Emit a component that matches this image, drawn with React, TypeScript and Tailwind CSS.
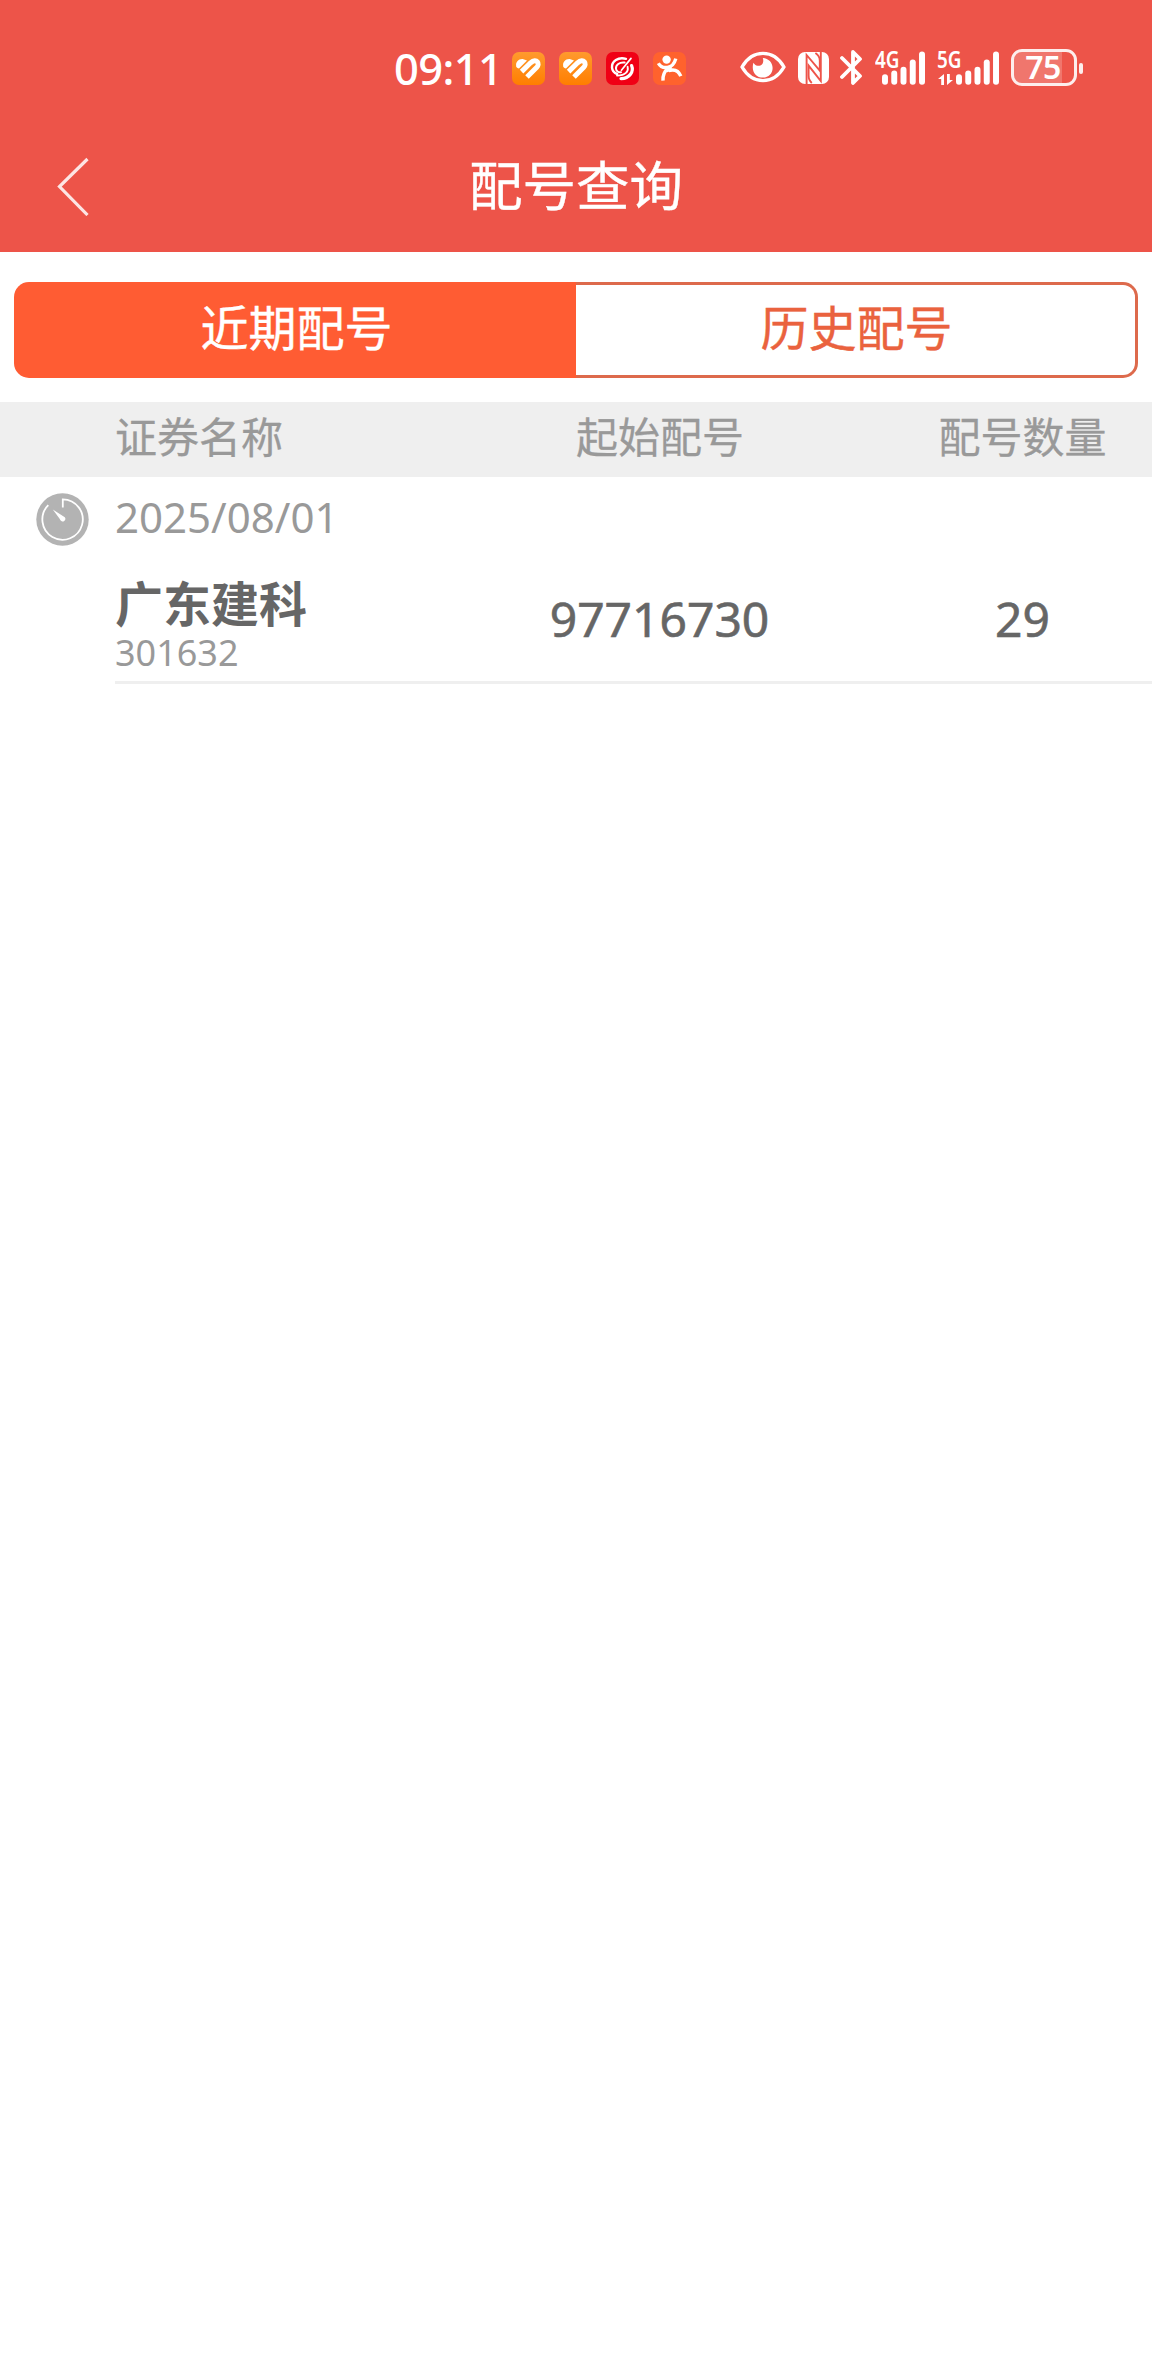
const allotments = [
  { date: '2025/08/01', name: '广东建科', code: '301632', startNumber: '97716730', count: '29' },
]

const signalBars = [
  { x: 0, y: 23.2 },
  { x: 9.3, y: 19.5 },
  { x: 18.6, y: 15.8 },
  { x: 27.9, y: 8.5 },
  { x: 37.2, y: 0.3 },
]

function HeartAppIcon() {
  return (
    <svg viewBox="0 0 33 33" className="size-[33px]">
      <defs>
        <linearGradient id="heartBg" x1="0" y1="0" x2="0" y2="1">
          <stop offset="0" stopColor="#ff9a2e" />
          <stop offset="1" stopColor="#ff7e00" />
        </linearGradient>
      </defs>
      <rect width="33" height="33" rx="7" fill="url(#heartBg)" />
      <path d="M4.2 14.2C3.2 10 7 6.4 11.4 7.2L15 8.4L7 16.6C5.5 16.4 4.6 15.5 4.2 14.2Z" fill="#fff" />
      <path
        d="M9.6 19.6L18.6 10.8C21.6 8 24.2 8.4 25.4 9.8C26.6 11.2 26.4 13.6 24.8 15.2L15 25"
        fill="none"
        stroke="#fff"
        strokeWidth="5"
      />
    </svg>
  )
}

function SwirlAppIcon() {
  return (
    <svg viewBox="0 0 33 33" className="size-[33px]">
      <rect width="33" height="33" rx="7" fill="#f00015" />
      <g fill="none" stroke="#fff" strokeLinecap="round">
        <path d="M20 6.8C12 4.6 5.6 9.4 6 15.6C6.3 19 8.4 21 11.2 22" strokeWidth="2.4" />
        <path d="M18.6 10.6C13.4 10 9.6 13 10 16.6C10.2 19 12.4 20.6 15 20.2" strokeWidth="2" />
        <path d="M25.6 13.6C28 19.4 23.8 26.6 15 26.6" strokeWidth="3.2" />
        <path d="M21.6 14.6C22.8 19.4 19.4 23.6 11 23.6" strokeWidth="1.8" />
        <path d="M25 6.4L15.4 18.2" strokeWidth="1.7" />
      </g>
    </svg>
  )
}

function RunnerAppIcon() {
  return (
    <svg viewBox="0 0 33 33" className="size-[33px]">
      <rect width="33" height="33" rx="7" fill="#ff622d" />
      <circle cx="13.6" cy="7.6" r="4.2" fill="#fff" />
      <g fill="none" stroke="#fff" strokeWidth="3.4">
        <path d="M5.4 11.2C7.2 14.6 10.4 16 14.4 15.4C18.6 14.8 21.4 11.8 22.8 6.6" />
        <path d="M10 28.6C9.6 23.8 11.4 19.4 15.4 15.8" />
        <path d="M15.6 18.6C21 17 25.6 18.6 27.8 24.2" />
      </g>
      <path d="M12.6 14.6L18.4 13.4L19 18.6L13.6 20.4Z" fill="#fff" />
    </svg>
  )
}

function EyeIcon() {
  return (
    <svg viewBox="0 0 46 32" className="h-8 w-[46px]">
      <path
        d="M2 16C7 7.4 14.4 2.4 23 2.4S39 7.4 44 16C39 24.6 31.6 29.6 23 29.6S7 24.6 2 16Z"
        fill="none"
        stroke="#fff"
        strokeWidth="3.4"
        strokeLinejoin="round"
      />
      <path
        d="M22.8 7C24.4 11.6 21.8 15.4 17.6 14.8C15.6 14.5 14.4 13.4 13.4 11.8C11 20.4 15.6 26.6 23 26.6C28.6 26.6 32.6 22.4 32.6 17C32.6 11.6 28.6 7.4 22.8 7Z"
        fill="#fff"
      />
    </svg>
  )
}

function NfcIcon() {
  return (
    <svg viewBox="0 0 31 32" className="h-8 w-[31px]">
      <rect width="31" height="32" rx="7" fill="#fff" />
      <g fill="none" stroke="#ee544a" strokeWidth="1.9">
        <path d="M8.6 32V3L21.8 18.6V8.6C21.8 5.2 20.4 3 17.4 1" />
        <path d="M22.8 0V29L10.6 13.6V23.6C10.6 27 11.4 29 13.8 31" />
      </g>
    </svg>
  )
}

function BluetoothIcon() {
  return (
    <svg viewBox="0 0 23 35" className="h-[35px] w-[23px]">
      <path
        d="M2 8L20 26L13 33V2L20 9L2 27"
        fill="none"
        stroke="#fff"
        strokeWidth="3.8"
        strokeLinecap="round"
        strokeLinejoin="round"
      />
    </svg>
  )
}

function SignalBars() {
  return (
    <svg viewBox="0 0 43.2 34" className="h-[34px] w-[43px]">
      {signalBars.map((bar) => (
        <rect key={bar.x} x={bar.x} y={bar.y} width="6" height={33.8 - bar.y} rx="3" fill="#fff" />
      ))}
    </svg>
  )
}

function StatusBar() {
  return (
    <div className="flex h-[120px] items-start pl-[394px] pt-[50px] text-white">
      <span className="w-[118px] shrink-0 whitespace-nowrap text-[43.5px] font-medium leading-[36px] tracking-[-0.6px]">
        09:11
      </span>
      <div className="flex shrink-0 gap-[14px] pt-0.5">
        <HeartAppIcon />
        <HeartAppIcon />
        <SwirlAppIcon />
        <RunnerAppIcon />
      </div>
      <div className="ml-[54px] flex shrink-0 items-start">
        <div className="pt-px">
          <EyeIcon />
        </div>
        <div className="ml-3 pt-0.5">
          <NfcIcon />
        </div>
        <div className="ml-[11px]">
          <BluetoothIcon />
        </div>
        <div className="relative ml-[19px] pt-[0.5px]">
          <span className="absolute -left-[7px] -top-px origin-left scale-x-[0.82] text-[23px] font-semibold leading-5">4G</span>
          <SignalBars />
        </div>
        <div className="relative ml-[31px] pt-[0.5px]">
          <span className="absolute -left-[19px] -top-px origin-left scale-x-[0.82] text-[23px] font-semibold leading-5">5G</span>
          <svg viewBox="0 0 15 11" className="absolute -left-[18px] top-[23.5px] h-[11px] w-[15px]">
            <path d="M0 5L6 0V11H3.2V5ZM15 6L9 11V0H11.8V6Z" fill="#fff" />
          </svg>
          <SignalBars />
        </div>
      </div>
      <div className="ml-[12px] flex shrink-0 items-center">
        <div className="relative -mt-px flex h-[37px] w-[66px] items-center justify-center rounded-[11px] border-[3px] border-white/90">
          <div className="absolute inset-y-0 left-0 w-[48px] rounded-l-[8px] bg-white/20" />
          <span className="relative -top-px -left-px text-[32px] font-semibold leading-8 tracking-[-0.5px]">75</span>
        </div>
        <div className="ml-[2px] h-[11px] w-1 rounded-full bg-white/90" />
      </div>
    </div>
  )
}

function TitleBar() {
  return (
    <div className="grid h-[132px] grid-cols-[1fr_auto_1fr] items-center text-white">
      <button type="button" aria-label="返回" className="pl-[57px]">
        <svg viewBox="0 0 34 60" className="h-[60px] w-[34px]">
          <path d="M30.5 3L2.5 30.5L30.5 59" fill="none" stroke="#fff" strokeOpacity="0.85" strokeWidth="3.2" />
        </svg>
      </button>
      <h1 className="text-[53.5px] leading-[80px] [-webkit-text-stroke:0.4px]">配号查询</h1>
    </div>
  )
}

function TimerIcon() {
  return (
    <svg viewBox="0 0 54 54" className="size-[54px]">
      <circle cx="27.5" cy="27.5" r="26.2" fill="#b3b3b3" />
      <path d="M13.3 13.2A20.2 20.2 0 1 0 27.8 7.3V15.5" fill="none" stroke="#fff" strokeWidth="1.8" />
      <path d="M17.8 17.4L29.8 25.2C31.4 27 29.6 30 27.2 29.4C26 29 25.2 28 24.8 27Z" fill="#fff" />
    </svg>
  )
}

function App() {
  return (
    <main className="min-h-[2376px] w-[1152px] bg-white font-['Noto_Sans','Noto_Sans_CJK_SC',sans-serif]">
      <header className="bg-[#ed5449]">
        <StatusBar />
        <TitleBar />
      </header>

      <div className="px-[14px] pb-6 pt-[30px]">
        <div className="grid h-24 grid-cols-2 text-[48px] leading-[80px] [-webkit-text-stroke:0.4px]">
          <button type="button" className="rounded-l-[15px] bg-[#ff5c33] pb-1 pl-[3px] text-white">
            近期配号
          </button>
          <button
            type="button"
            className="rounded-r-[15px] border-[3px] border-l-0 border-[#dd6a4c] bg-white pb-1 pl-0.5 text-[#ea623e]"
          >
            历史配号
          </button>
        </div>
      </div>

      <div className="grid h-[75px] grid-cols-[461px_397px_329px] bg-[#efefef] text-[42px] leading-[70px] text-[#999] [-webkit-text-stroke:0.3px]">
        <span className="pl-[115px]">证券名称</span>
        <span className="pl-px text-center">起始配号</span>
        <span className="text-center">配号数量</span>
      </div>

      {allotments.map((item) => (
        <section key={item.code}>
          <div className="flex h-[84px] items-center pl-[35px] text-[#999]">
            <TimerIcon />
            <span className="ml-[26px] pb-1 text-[42px] leading-[80px]">{item.date}</span>
          </div>
          <div className="ml-[115px] grid h-[123px] grid-cols-[346px_397px_329px] border-b-[3px] border-[#efefef] text-[#666]">
            <div className="pt-[15px]">
              <p className="text-[48px] font-bold leading-[56px]">{item.name}</p>
              <p className="text-[36px] leading-[42px] text-[#999]">{item.code}</p>
            </div>
            <p className="pt-[18px] text-center text-[48px] leading-[80px] [-webkit-text-stroke:0.6px]">
              {item.startNumber}
            </p>
            <p className="pt-[18px] text-center text-[48px] leading-[80px] [-webkit-text-stroke:0.6px]">{item.count}</p>
          </div>
        </section>
      ))}
    </main>
  )
}

export default App
